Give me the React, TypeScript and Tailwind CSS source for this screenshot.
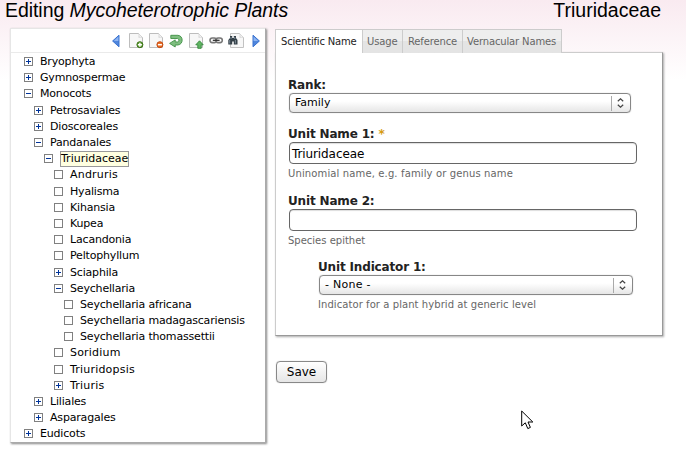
import React from "react";

type Node = { name: string; depth: number; mark: "plus" | "minus" | "leaf"; selected?: boolean; wide?: boolean };

const nodes: Node[] = [
  { name: "Bryophyta", depth: 0, mark: "plus" },
  { name: "Gymnospermae", depth: 0, mark: "plus" },
  { name: "Monocots", depth: 0, mark: "minus" },
  { name: "Petrosaviales", depth: 1, mark: "plus" },
  { name: "Dioscoreales", depth: 1, mark: "plus" },
  { name: "Pandanales", depth: 1, mark: "minus" },
  { name: "Triuridaceae", depth: 2, mark: "minus", selected: true },
  { name: "Andruris", depth: 3, mark: "leaf", wide: true },
  { name: "Hyalisma", depth: 3, mark: "leaf" },
  { name: "Kihansia", depth: 3, mark: "leaf" },
  { name: "Kupea", depth: 3, mark: "leaf" },
  { name: "Lacandonia", depth: 3, mark: "leaf" },
  { name: "Peltophyllum", depth: 3, mark: "leaf" },
  { name: "Sciaphila", depth: 3, mark: "plus" },
  { name: "Seychellaria", depth: 3, mark: "minus" },
  { name: "Seychellaria africana", depth: 4, mark: "leaf" },
  { name: "Seychellaria madagascariensis", depth: 4, mark: "leaf" },
  { name: "Seychellaria thomassettii", depth: 4, mark: "leaf" },
  { name: "Soridium", depth: 3, mark: "leaf", wide: true },
  { name: "Triuridopsis", depth: 3, mark: "leaf", wide: true },
  { name: "Triuris", depth: 3, mark: "plus", wide: true },
  { name: "Liliales", depth: 1, mark: "plus" },
  { name: "Asparagales", depth: 1, mark: "plus" },
  { name: "Eudicots", depth: 0, mark: "plus" },
];

const indents = ["pl-[13px]", "pl-[23px]", "pl-[33px]", "pl-[43px]", "pl-[53px]"];

function Marker({ mark }: { mark: Node["mark"] }) {
  return (
    <svg width="9" height="9" viewBox="0 0 9 9" className="shrink-0" shapeRendering="crispEdges">
      <rect x="0.5" y="0.5" width="8" height="8" fill="#fff" stroke="#808080" />
      {mark !== "leaf" && <path d="M2 4.5H7" stroke="#003399" />}
      {mark === "plus" && <path d="M4.5 2V7" stroke="#003399" />}
    </svg>
  );
}

function Page({ children }: { children?: React.ReactNode }) {
  return (
    <svg width="16" height="16" viewBox="0 0 16 16">
      <path d="M1.5 .5H10.5L14.5 4.5V14.5H1.5Z" fill="#f7f7f7" stroke="#bdbdbd" />
      <path d="M10.5 .5C11.5 2 11 4 10.8 4.3C12 4 13.5 4 14.5 4.8" fill="#fff" stroke="#c9c9c9" strokeWidth=".8" />
      {children}
    </svg>
  );
}

function Toolbar() {
  return (
    <div className="flex h-6 shrink-0 items-center justify-end gap-1 border-b border-[#eaeaea] pr-px">
      <svg width="16" height="16" viewBox="0 0 16 16">
        <path d="M11 2.2V13.8L4.6 8Z" fill="#4f86dc" stroke="#3a72cf" />
        <path d="M10.4 3.6V8H5.8Z" fill="#8db4f2" />
      </svg>
      <Page>
        <circle cx="11.9" cy="11.7" r="3" fill="#5f9d33" stroke="#3c7318" />
        <path d="M11.9 9.7V13.7M9.9 11.7H13.9" stroke="#fff" strokeWidth="1.4" />
      </Page>
      <Page>
        <circle cx="11.9" cy="11.7" r="3" fill="#e96b20" stroke="#c44b12" />
        <path d="M9.9 11.7H13.9" stroke="#fff" strokeWidth="1.5" />
      </Page>
      <svg width="16" height="16" viewBox="0 0 16 16">
        <path
          d="M2.8 2.3H9.8C15.6 2.6 15.6 11.6 9.8 12H7.2V14L1.6 10.4L7.2 6.9V8.9H9.6C11.4 8.6 11.4 5.8 9.6 5.5H2.8Z"
          fill="#7fbe80"
          stroke="#3f9145"
          strokeWidth=".9"
          strokeLinejoin="round"
        />
      </svg>
      <Page>
        <path d="M11.5 7.8L15.2 11.8H13.2V15.3H9.8V11.8H7.8Z" fill="#61b463" stroke="#32883a" strokeWidth=".9" />
      </Page>
      <svg width="16" height="16" viewBox="0 0 16 16" fill="none">
        <rect x="2" y="5" width="6.5" height="4.6" rx="2.3" stroke="#777" strokeWidth="1.6" />
        <rect x="7.8" y="5" width="6.5" height="4.6" rx="2.3" stroke="#777" strokeWidth="1.6" />
        <path d="M4.8 7.3H11.6" stroke="#333" strokeWidth="1.3" />
      </svg>
      <svg width="16" height="16" viewBox="0 0 16 16">
        <path d="M2.5 .5H11.5L15.5 4.5V14.5H2.5Z" fill="#f7f7f7" stroke="#c2c2c2" />
        <path d="M11.5 .5C12.5 2 12 4 11.8 4.3C13 4 14.5 4 15.5 4.8" fill="#fff" stroke="#c9c9c9" strokeWidth=".8" />
        <path d="M2 3H4.2V5H5.8V3H8V5L9.5 7V11.5H5.8V8.5H4.2V11.5H.3V7L2 5Z" fill="#333f47" />
        <path d="M1.7 7V10.5M7.4 7V10.5M3 4V6M6.8 4V6" stroke="#8c9ba7" strokeWidth=".8" />
      </svg>
      <svg width="16" height="16" viewBox="0 0 16 16">
        <path d="M5 2.2V13.8L11.4 8Z" fill="#4f86dc" stroke="#3a72cf" />
        <path d="M5.6 3.6V8H10.2Z" fill="#8db4f2" />
      </svg>
    </div>
  );
}

function Select({ value, className }: { value: string; className: string }) {
  return (
    <div
      className={`flex h-5 items-center rounded-[4px] border border-[#878787] bg-linear-to-b from-white from-40% to-[#e6e6e6] shadow-[0_0_1px_#aaa] ${className}`}
    >
      <span className="flex-1 text-[11px] leading-[18px]">{value}</span>
      <span className="flex h-[15px] w-[19px] items-center justify-center border-l border-[#aaa] pr-[2px]">
        <svg width="7" height="10" viewBox="0 0 7 10" fill="none" stroke="#444" strokeWidth="1.2">
          <path d="M.8 3.3L3.5 .8L6.2 3.3M.8 6.7L3.5 9.2L6.2 6.7" />
        </svg>
      </span>
    </div>
  );
}

function TextField({ value }: { value: string }) {
  return (
    <div className="ml-px h-[22px] w-[348px] rounded-[4px] border border-[#666] bg-white pl-[2px] text-[12px] leading-[22px] tracking-[-0.1px] shadow-[inset_0_1px_1px_#ddd]">
      {value}
    </div>
  );
}

const label = "h-[15px] text-[12px] leading-[15px] font-bold tracking-[-0.16px] text-[#222]";
const help = "h-4 text-[10px] leading-[19px] text-[#666]";
const tab =
  "border-t border-r border-[#ccc] bg-linear-to-b from-[#eee] from-50% to-[#e4e4e4] to-50% tracking-[-0.14px] whitespace-nowrap";

export default function App() {
  return (
    <div className="h-[452px] w-[686px] overflow-hidden bg-white bg-linear-to-b from-[#f9eaf0] to-white to-[80px] font-['DejaVu_Sans',sans-serif] text-black">
      <header className="flex h-7 justify-between pr-[25px] pl-[5px] font-['Liberation_Sans',sans-serif] text-[19.5px] leading-[21px]">
        <h1 className="tracking-[-0.06px]">
          Editing <em>Mycoheterotrophic Plants</em>
        </h1>
        <h2>Triuridaceae</h2>
      </header>
      <div className="flex gap-[9px] pl-[10px]">
        <aside className="flex h-[415px] w-[256px] flex-col border border-[#e6e6e6] border-r-[#aaa] border-b-[#aaa] bg-white shadow-[1px_1px_2px_#888]">
          <Toolbar />
          <ul className="pt-[0.5px]">
            {nodes.map((node) => (
              <li key={node.name} className={`flex h-[16.2px] items-center gap-[6px] ${indents[node.depth]}`}>
                <Marker mark={node.mark} />
                <span
                  className={`border text-[11px] whitespace-nowrap ${
                    node.selected
                      ? "ml-px border-[#999] bg-[#ffffe0] leading-[14px]"
                      : node.wide
                        ? "border-transparent pt-px leading-[14px] tracking-[0.2px]"
                        : "border-transparent pt-px leading-[14px] tracking-[-0.18px]"
                  }`}
                >
                  {node.name}
                </span>
              </li>
            ))}
          </ul>
        </aside>
        <main className="w-[388px] pt-px">
          <nav className="flex h-6 text-[10px] leading-[24px] text-[#666]">
            <span className="relative z-10 h-6 w-[88px] border border-b-0 border-[#ccc] bg-white pl-[5px] tracking-[-0.19px] whitespace-nowrap text-[#222]">
              Scientific Name
            </span>
            <span className={`w-10 pl-1 ${tab}`}>Usage</span>
            <span className={`w-15 pl-[5px] ${tab}`}>Reference</span>
            <span className={`w-[99px] pl-1 ${tab}`}>Vernacular Names</span>
          </nav>
          <section className="-mt-px h-[284px] border border-[#ccc] border-r-[#999] border-b-[#999] bg-white pt-[25px] pl-3 shadow-[1px_1px_2px_#aaa]">
            <div className={label}>Rank:</div>
            <Select value="Family" className="ml-px w-[342px] pl-[5px]" />
            <div className={`${label} mt-[14px]`}>
              Unit Name 1: <span className="text-[#d69a10]">*</span>
            </div>
            <TextField value="Triuridaceae" />
            <div className={`${help} tracking-[0.13px]`}>Uninomial name, e.g. family or genus name</div>
            <div className={`${label} mt-[14px]`}>Unit Name 2:</div>
            <TextField value="" />
            <div className={help}>Species epithet</div>
            <div className="mt-[13px] pl-[30px]">
              <div className={label}>Unit Indicator 1:</div>
              <Select value="- None -" className="ml-px w-[314px] pl-[5px] tracking-[0.25px]" />
              <div className={`${help} tracking-[0.07px]`}>Indicator for a plant hybrid at generic level</div>
            </div>
          </section>
          <button className="mt-[25px] ml-px block h-[22px] w-[51px] rounded-[4px] border border-[#888] bg-linear-to-b from-white to-[#e6e6e6] text-[12px] leading-[21px] shadow-[0_0_1px_#aaa]">
            Save
          </button>
        </main>
      </div>
      <svg className="absolute top-[410px] left-[521px]" width="14" height="21" viewBox="0 0 14 21">
        <path d="M.7 1V16L4.3 12.8L6.8 18.6L9.4 17.4L7 12H11.8Z" fill="#fff" stroke="#000" />
      </svg>
    </div>
  );
}
